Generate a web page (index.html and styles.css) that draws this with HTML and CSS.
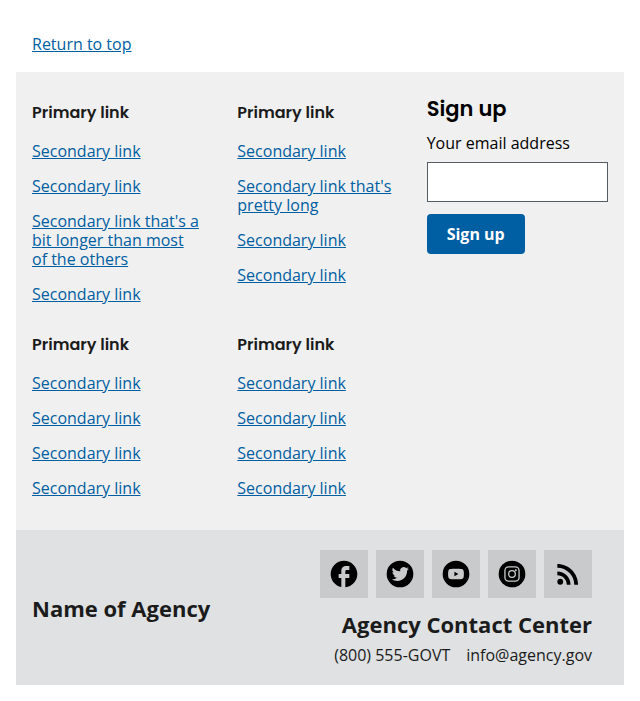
FILE: index.html
```html
<!DOCTYPE html>
<html lang="en">
<head>
<meta charset="utf-8">
<meta name="viewport" content="width=device-width, initial-scale=1">
<title>Agency footer</title>
<link rel="stylesheet" href="styles.css">
</head>
<body>
<footer class="footer">
  <div class="return-to-top"><a href="#">Return to top</a></div>
  <div class="primary">
    <nav class="nav" aria-label="Footer navigation">
      <section>
        <h2 class="nav-heading">Primary link</h2>
        <ul class="nav-list">
          <li><a href="#">Secondary link</a></li>
          <li><a href="#">Secondary link</a></li>
          <li><a href="#">Secondary link that's a bit longer than most of&nbsp;the others</a></li>
          <li><a href="#">Secondary link</a></li>
        </ul>
      </section>
      <section>
        <h2 class="nav-heading">Primary link</h2>
        <ul class="nav-list">
          <li><a href="#">Secondary link</a></li>
          <li><a href="#">Secondary link that's pretty long</a></li>
          <li><a href="#">Secondary link</a></li>
          <li><a href="#">Secondary link</a></li>
        </ul>
      </section>
      <section>
        <h2 class="nav-heading">Primary link</h2>
        <ul class="nav-list">
          <li><a href="#">Secondary link</a></li>
          <li><a href="#">Secondary link</a></li>
          <li><a href="#">Secondary link</a></li>
          <li><a href="#">Secondary link</a></li>
        </ul>
      </section>
      <section>
        <h2 class="nav-heading">Primary link</h2>
        <ul class="nav-list">
          <li><a href="#">Secondary link</a></li>
          <li><a href="#">Secondary link</a></li>
          <li><a href="#">Secondary link</a></li>
          <li><a href="#">Secondary link</a></li>
        </ul>
      </section>
    </nav>
    <form class="signup">
      <h2 class="signup-heading">Sign up</h2>
      <label class="signup-label" for="email">Your email address</label>
      <input class="signup-input" id="email" name="email" type="email">
      <button class="signup-button" type="submit">Sign up</button>
    </form>
  </div>
  <div class="secondary">
    <p class="agency-name">Name of Agency</p>
    <div class="contact">
      <div class="social">
        <a class="social-link" href="#" aria-label="Facebook"><svg viewBox="0 0 24 24" aria-hidden="true"><path d="M22 12c0-5.520-4.480-10-10-10S2 6.480 2 12c0 4.840 3.440 8.870 8 9.800V15H8v-3h2V9.500C10 7.570 11.570 6 13.500 6H16v3h-2c-.55 0-1 .45-1 1v2h3v3h-3v6.950c5.050-.5 9-4.760 9-9.950z"/></svg></a>
        <a class="social-link" href="#" aria-label="Twitter"><svg viewBox="0 0 24 24" aria-hidden="true"><path fill-rule="evenodd" d="M12 2a10 10 0 1 0 0 20 10 10 0 0 0 0-20zm5.340 7.330v.350c0 3.480-2.650 7.490-7.490 7.490a7.450 7.450 0 0 1-4.040-1.180c.210.020.420.040.630.040a5.280 5.280 0 0 0 3.270-1.130 2.630 2.630 0 0 1-2.460-1.830c.380.070.770.060 1.190-.05a2.630 2.630 0 0 1-2.110-2.580v-.03c.350.200.760.310 1.190.330a2.630 2.630 0 0 1-.81-3.520 7.470 7.470 0 0 0 5.430 2.750 2.630 2.630 0 0 1 4.490-2.400 5.270 5.270 0 0 0 1.670-.64 2.640 2.640 0 0 1-1.160 1.460 5.280 5.280 0 0 0 1.510-.42 5.360 5.360 0 0 1-1.310 1.360z"/></svg></a>
        <a class="social-link" href="#" aria-label="YouTube"><svg viewBox="0 0 24 24" aria-hidden="true"><path fill-rule="evenodd" d="M12 2a10 10 0 1 0 0 20 10 10 0 0 0 0-20zm5.700 7.600c.3 1.100.3 3.700 0 4.800-.2.700-.6 1.200-1.300 1.350-1.900.35-6.900.35-8.800 0-.7-.15-1.100-.65-1.300-1.350-.3-1.100-.3-3.700 0-4.800.2-.7.600-1.200 1.300-1.350 1.900-.35 6.900-.35 8.800 0 .7.150 1.100.65 1.300 1.350zM10.800 10.300v3.400l3-1.700z"/></svg></a>
        <a class="social-link" href="#" aria-label="Instagram"><svg viewBox="0 0 24 24" aria-hidden="true"><circle cx="12" cy="12" r="10"/><rect class="icon-line" x="6.700" y="6.700" width="10.600" height="10.600" rx="2.700"/><circle class="icon-line" cx="12" cy="12" r="2.500"/><circle class="icon-dot" cx="14.900" cy="9.100" r=".75"/></svg></a>
        <a class="social-link" href="#" aria-label="RSS"><svg viewBox="0 0 24 24" aria-hidden="true"><circle cx="6.180" cy="17.820" r="2.180"/><path d="M4 4.440v2.830c7.030 0 12.730 5.700 12.730 12.730h2.830c0-8.590-6.970-15.560-15.560-15.560zm0 5.660v2.830c3.900 0 7.070 3.170 7.070 7.070h2.830c0-5.470-4.430-9.900-9.900-9.900z"/></svg></a>
      </div>
      <p class="contact-heading">Agency Contact Center</p>
      <address class="contact-info">
        <a href="tel:8005554688">(800) 555-GOVT</a>
        <a href="mailto:info@agency.gov">info@agency.gov</a>
      </address>
    </div>
  </div>
</footer>
</body>
</html>
```
FILE: styles.css
```css
*,
*::before,
*::after {
  box-sizing: border-box;
}

body {
  margin: 16px;
  color: #1b1b1b;
  background: #fff;
  font-family: "Open Sans", "Noto Sans", sans-serif;
  font-size: 16px;
  line-height: 19px;
}

h2,
p,
ul {
  margin: 0;
  padding: 0;
}

a {
  color: #005ea2;
}

.return-to-top {
  padding: 20px 16px;
  line-height: 16px;
}

.primary {
  display: grid;
  grid-template-columns: repeat(12, minmax(0, 1fr));
  column-gap: 16px;
  padding: 0 16px;
  background: #f0f0f0;
}

.nav {
  grid-column: span 8;
  display: grid;
  grid-template-columns: repeat(2, minmax(0, 1fr));
  gap: 32px;
  padding: 32px 0;
}

.nav-heading,
.signup-heading {
  font-family: Poppins, "Open Sans", sans-serif;
  font-weight: 600;
}

.nav-heading {
  margin-bottom: 20px;
  font-size: 16px;
  line-height: 18px;
}

.nav-list {
  display: grid;
  gap: 16px;
  list-style: none;
}

.signup {
  grid-column: span 4;
  display: flex;
  flex-direction: column;
  align-items: flex-start;
  padding: 24px 0 32px;
  color: #000;
}

.signup-heading {
  font-size: 21px;
  line-height: 26px;
}

.signup-label {
  margin-top: 12px;
}

.signup-input {
  width: 100%;
  height: 40px;
  margin-top: 9px;
  padding: 8px;
  border: 1px solid #565c65;
  border-radius: 0;
  background: #fff;
  color: #1b1b1b;
  font: inherit;
}

.signup-button {
  margin-top: 12px;
  padding: 12px 20px;
  border: 0;
  border-radius: 4px;
  background: #005ea2;
  color: #fff;
  font: inherit;
  font-weight: 700;
  line-height: 16px;
}

.secondary {
  display: flex;
  align-items: center;
  justify-content: space-between;
  padding: 20px 32px 20px 16px;
  background: #dfe1e2;
}

.agency-name,
.contact-heading {
  font-size: 22px;
  font-weight: 700;
  line-height: 20px;
}

.contact {
  display: flex;
  flex-direction: column;
  align-items: flex-end;
}

.social {
  display: flex;
  gap: 8px;
}

.social-link {
  display: flex;
  padding: 8px;
  background: #c8cacb;
}

.social-link svg {
  width: 32px;
  height: 32px;
  fill: #000;
}

.social-link .icon-line {
  fill: none;
  stroke: #c8cacb;
  stroke-width: 1;
}

.social-link .icon-dot {
  fill: #c8cacb;
}

.contact-heading {
  margin-top: 16px;
}

.contact-info {
  display: flex;
  gap: 16px;
  margin-top: 12px;
  font-style: normal;
}

.contact-info a {
  color: inherit;
  text-decoration: none;
}
```
